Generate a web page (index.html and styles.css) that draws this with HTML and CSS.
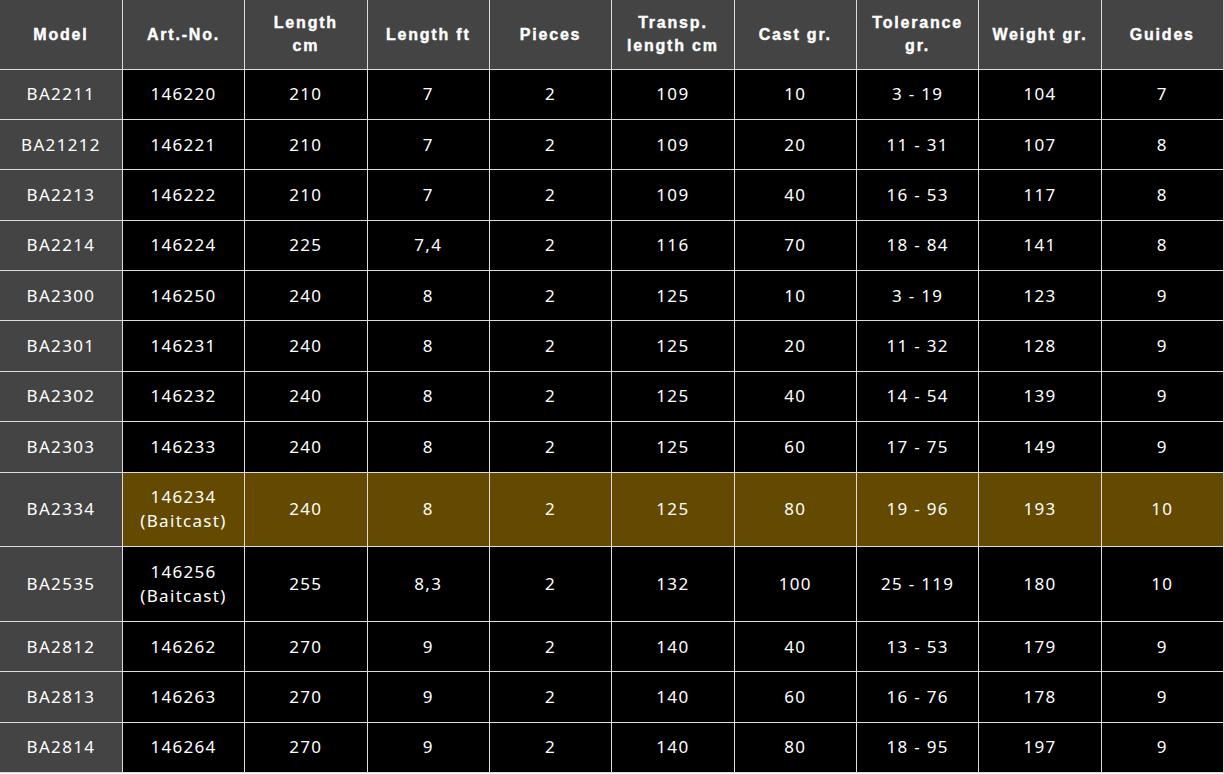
FILE: index.html
```html
<!DOCTYPE html>
<html lang="en">
<head>
<meta charset="utf-8">
<title>Rod specifications</title>
<link rel="stylesheet" href="styles.css">
</head>
<body>
<table class="spec">
  <thead>
    <tr>
      <th>Model</th>
      <th>Art.-No.</th>
      <th>Length<br>cm</th>
      <th>Length ft</th>
      <th>Pieces</th>
      <th>Transp.<br>length cm</th>
      <th>Cast gr.</th>
      <th>Tolerance<br>gr.</th>
      <th>Weight gr.</th>
      <th>Guides</th>
    </tr>
  </thead>
  <tbody>
    <tr><td>BA2211</td><td>146220</td><td>210</td><td>7</td><td>2</td><td>109</td><td>10</td><td>3 - 19</td><td>104</td><td>7</td></tr>
    <tr><td>BA21212</td><td>146221</td><td>210</td><td>7</td><td>2</td><td>109</td><td>20</td><td>11 - 31</td><td>107</td><td>8</td></tr>
    <tr><td>BA2213</td><td>146222</td><td>210</td><td>7</td><td>2</td><td>109</td><td>40</td><td>16 - 53</td><td>117</td><td>8</td></tr>
    <tr><td>BA2214</td><td>146224</td><td>225</td><td>7,4</td><td>2</td><td>116</td><td>70</td><td>18 - 84</td><td>141</td><td>8</td></tr>
    <tr><td>BA2300</td><td>146250</td><td>240</td><td>8</td><td>2</td><td>125</td><td>10</td><td>3 - 19</td><td>123</td><td>9</td></tr>
    <tr><td>BA2301</td><td>146231</td><td>240</td><td>8</td><td>2</td><td>125</td><td>20</td><td>11 - 32</td><td>128</td><td>9</td></tr>
    <tr><td>BA2302</td><td>146232</td><td>240</td><td>8</td><td>2</td><td>125</td><td>40</td><td>14 - 54</td><td>139</td><td>9</td></tr>
    <tr><td>BA2303</td><td>146233</td><td>240</td><td>8</td><td>2</td><td>125</td><td>60</td><td>17 - 75</td><td>149</td><td>9</td></tr>
    <tr class="tall highlight"><td>BA2334</td><td>146234<br>(Baitcast)</td><td>240</td><td>8</td><td>2</td><td>125</td><td>80</td><td>19 - 96</td><td>193</td><td>10</td></tr>
    <tr class="tall"><td>BA2535</td><td>146256<br>(Baitcast)</td><td>255</td><td>8,3</td><td>2</td><td>132</td><td>100</td><td>25 - 119</td><td>180</td><td>10</td></tr>
    <tr><td>BA2812</td><td>146262</td><td>270</td><td>9</td><td>2</td><td>140</td><td>40</td><td>13 - 53</td><td>179</td><td>9</td></tr>
    <tr><td>BA2813</td><td>146263</td><td>270</td><td>9</td><td>2</td><td>140</td><td>60</td><td>16 - 76</td><td>178</td><td>9</td></tr>
    <tr><td>BA2814</td><td>146264</td><td>270</td><td>9</td><td>2</td><td>140</td><td>80</td><td>18 - 95</td><td>197</td><td>9</td></tr>
  </tbody>
</table>
</body>
</html>
```
FILE: styles.css
```css
html, body {
  margin: 0;
  padding: 0;
  background: #ffffff;
}

.spec {
  width: 1224px;
  border-collapse: collapse;
  table-layout: fixed;
  color: #ffffff;
}

.spec th,
.spec td {
  border: 1px solid #dcdcdc;
  text-align: center;
  vertical-align: middle;
  padding: 0 2px;
}

.spec th {
  background: #444444;
  height: 68.5px;
  font-family: "Liberation Sans", Arial, sans-serif;
  font-weight: bold;
  font-size: 16px;
  line-height: 23px;
  letter-spacing: 1.8px;
  border-top: none;
  -webkit-text-stroke: 0.4px #ffffff;
}

.spec td {
  background: #000000;
  height: 49.375px;
  font-family: "Noto Sans", sans-serif;
  font-size: 17px;
  line-height: 24px;
  letter-spacing: 1.3px;
}

.spec th:first-child,
.spec td:first-child {
  border-left: none;
  background: #444444;
}

.spec tr.tall td {
  height: 73.75px;
}

.spec tr.highlight td:not(:first-child) {
  background: #634a00;
}
```
